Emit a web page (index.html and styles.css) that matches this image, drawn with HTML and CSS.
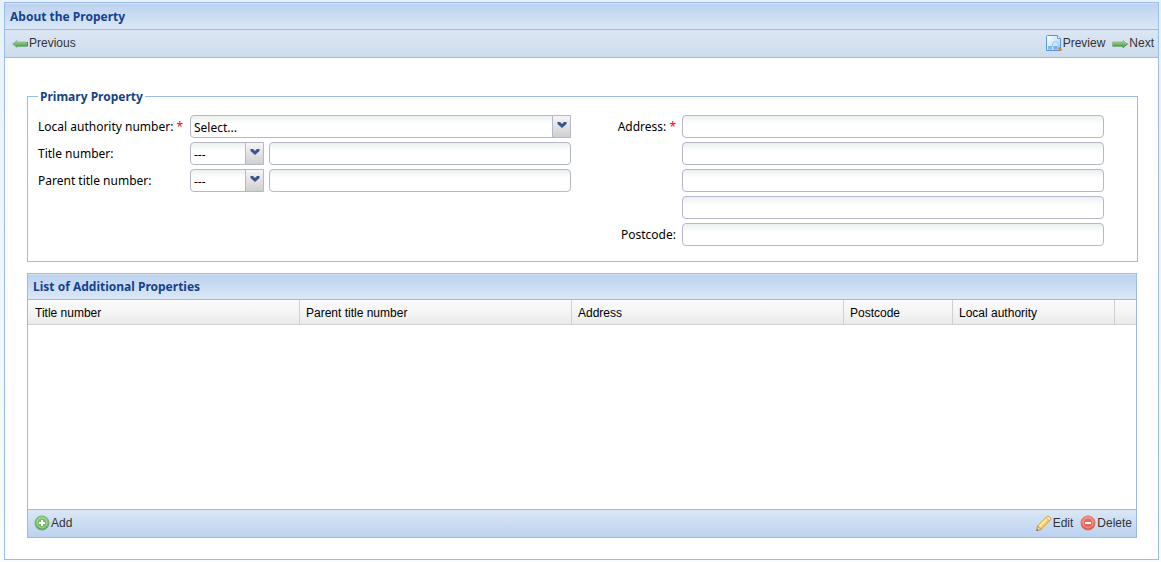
FILE: index.html
```
<!DOCTYPE html>
<html lang="en">
<head>
    <meta charset="UTF-8">
    <meta name="viewport" content="width=device-width, initial-scale=1.0">
    <title>About the Property</title>
    <link rel="stylesheet" href="styles.css">
</head>
<body>
    <!-- Shared gradients for the icons -->
    <svg class="defs" aria-hidden="true">
        <defs>
            <linearGradient id="green" x1="0" y1="0" x2="0" y2="1">
                <stop offset="0" stop-color="#a2d792"/>
                <stop offset="1" stop-color="#4f9b4d"/>
            </linearGradient>
            <linearGradient id="red" x1="0" y1="0" x2="0" y2="1">
                <stop offset="0" stop-color="#f79a8c"/>
                <stop offset="1" stop-color="#dc4b40"/>
            </linearGradient>
            <linearGradient id="page" x1="0" y1="0" x2="1" y2="1">
                <stop offset="0" stop-color="#ffffff"/>
                <stop offset="1" stop-color="#a9d2f4"/>
            </linearGradient>
        </defs>
    </svg>

    <main class="panel">
        <h1 class="panel-header">About the Property</h1>

        <div class="toolbar toolbar-top">
            <button type="button" class="btn">
                <svg class="icon" viewBox="0 0 16 16"><path d="M.5 9L5 5.500v1.500h10.500v4H5v1.500z" fill="url(#green)" stroke="#86bd7e" stroke-width=".8"/><path d="M15.500 7v4H5" fill="none" stroke="#4c8f4c"/></svg>
                Previous
            </button>
            <span class="fill"></span>
            <button type="button" class="btn">
                <svg class="icon" viewBox="0 0 16 16"><path d="M.5 1.500q0-1 1-1h10l3 3v12H.5z" fill="url(#page)" stroke="#5b94d2"/><path d="M11.500.5v3h3" fill="#e4f1fc" stroke="#6ea3da"/><path d="M2 11h4v3.500H2z" fill="#76bdf3"/><path d="M6.500 12V9.500a3 3 0 0 1 6 0V12" fill="#c8e4fb" stroke="#9ccaf4"/><path d="M7.500 11h4v3.500h-4z" fill="#68b3ef"/><path d="M12.500 12.500l3 3" stroke="#c58d45" stroke-width="2.400"/></svg>
                Preview
            </button>
            <button type="button" class="btn">
                <svg class="icon" viewBox="0 0 16 16"><path d="M15.500 9L11 5.500v1.500H.5v4H11v1.500z" fill="url(#green)" stroke="#86bd7e" stroke-width=".8"/><path d="M.5 11H11v1.500L15.500 9" fill="none" stroke="#4c8f4c"/></svg>
                Next
            </button>
        </div>

        <div class="panel-body">
            <fieldset class="fieldset">
                <legend>Primary Property</legend>
                <div class="form">
                    <div class="form-left">
                        <label for="authority">Local authority number: <span class="required">*</span></label>
                        <div class="combo">
                            <select id="authority"><option>Select...</option></select>
                            <svg class="arrow" viewBox="0 0 10 6"><path d="M.5 0h2.500l2 2 2-2h2.500v2L5 6 .5 2z"/></svg>
                        </div>

                        <label for="title-number">Title number:</label>
                        <div class="field-pair">
                            <div class="combo combo-small">
                                <select aria-label="Title number prefix"><option>---</option></select>
                                <svg class="arrow" viewBox="0 0 10 6"><path d="M.5 0h2.500l2 2 2-2h2.500v2L5 6 .5 2z"/></svg>
                            </div>
                            <input type="text" id="title-number">
                        </div>

                        <label for="parent-number">Parent title number:</label>
                        <div class="field-pair">
                            <div class="combo combo-small">
                                <select aria-label="Parent title number prefix"><option>---</option></select>
                                <svg class="arrow" viewBox="0 0 10 6"><path d="M.5 0h2.500l2 2 2-2h2.500v2L5 6 .5 2z"/></svg>
                            </div>
                            <input type="text" id="parent-number">
                        </div>
                    </div>

                    <div class="form-right">
                        <label for="address1">Address: <span class="required">*</span></label>
                        <div class="address-lines">
                            <input type="text" id="address1">
                            <input type="text" aria-label="Address line 2">
                            <input type="text" aria-label="Address line 3">
                            <input type="text" aria-label="Address line 4">
                        </div>
                        <label for="postcode">Postcode:</label>
                        <input type="text" id="postcode">
                    </div>
                </div>
            </fieldset>

            <section class="grid">
                <h2 class="panel-header">List of Additional Properties</h2>
                <div class="grid-body">
                    <table>
                        <colgroup>
                            <col><col><col>
                            <col class="col-postcode">
                            <col class="col-authority">
                            <col class="col-scroll">
                        </colgroup>
                        <thead>
                            <tr>
                                <th>Title number</th>
                                <th>Parent title number</th>
                                <th>Address</th>
                                <th>Postcode</th>
                                <th>Local authority</th>
                                <td></td>
                            </tr>
                        </thead>
                    </table>
                </div>
                <div class="toolbar toolbar-bottom">
                    <button type="button" class="btn">
                        <svg class="icon" viewBox="0 0 16 16"><circle cx="8" cy="8" r="7" fill="url(#green)" stroke="#6fae68"/><circle cx="8" cy="8" r="5" fill="#79bd68" stroke="#a9d99c"/><path d="M8 5v6M5 8h6" stroke="#fff" stroke-width="2"/></svg>
                        Add
                    </button>
                    <span class="fill"></span>
                    <button type="button" class="btn">
                        <svg class="icon" viewBox="0 0 16 16"><path d="M1.500 11L11 1.500q1-1 2 0l1.500 1.500q1 1 0 2L5 14.500l-4 1z" fill="#f9c752" stroke="#d39a3e" stroke-width=".8"/><path d="M3.500 11.500l8-8" stroke="#fff0a0" stroke-width="2"/><path d="M1.500 11L5 14.500l-4 1z" fill="#f4dfba" stroke="#b88746" stroke-width=".8"/><path d="M.8 14l1.600 1.300-1.900.5z" fill="#555"/><path d="M11 1.500q1-1 2 0l1.500 1.500q1 1 0 2l-1 1-3.500-3.500z" fill="#fbe7b8" stroke="#c9994b" stroke-width=".8"/></svg>
                        Edit
                    </button>
                    <button type="button" class="btn">
                        <svg class="icon" viewBox="0 0 16 16"><circle cx="8" cy="8" r="7" fill="url(#red)" stroke="#dc6c62"/><circle cx="8" cy="8" r="5" fill="#e9685b" stroke="#f5a298"/><path d="M5 8h6" stroke="#fff" stroke-width="2"/></svg>
                        Delete
                    </button>
                </div>
            </section>
        </div>
    </main>
</body>
</html>
```
FILE: styles.css
```
:root {
    --border: #99bce8;
    --field-border: #b5b8c8;
    --title: #15428b;
}

* {
    box-sizing: border-box;
}

body {
    display: flex;
    min-height: 100vh;
    margin: 0;
    padding: 2px 2px 2px 4px;
    background: linear-gradient(#e8f1fa, #f8fcff);
    color: #000;
    font-family: "Noto Sans", Tahoma, sans-serif;
    font-size: 12px;
}

.defs {
    position: absolute;
    width: 0;
    height: 0;
}

.panel {
    display: flex;
    flex: 1;
    flex-direction: column;
    border: 1px solid var(--border);
    background: #fff;
}

.panel-header {
    height: 26px;
    margin: 0;
    padding: 0 5px;
    background: linear-gradient(#bcd2ef, #dae7f6);
    box-shadow: inset 0 1px #d3e1f5;
    color: var(--title);
    font-size: 12px;
    font-weight: bold;
    line-height: 27px;
}

.toolbar {
    display: flex;
    align-items: center;
    gap: 7px;
    height: 29px;
    padding: 0 4px 2px 7px;
    border-top: 1px solid var(--border);
}

.toolbar-top {
    border-bottom: 1px solid var(--border);
    background: linear-gradient(#dce6f4, #cddced);
}

.toolbar-bottom {
    height: 28px;
    padding: 0 4px 2px 6px;
    background: linear-gradient(#dae7f6, #bcd2ef);
}

.fill {
    flex: 1;
}

.btn {
    display: flex;
    align-items: center;
    gap: 1px;
    padding: 0;
    border: 0;
    background: none;
    color: #333;
    font-family: "Liberation Sans", Arial, sans-serif;
    font-size: 12px;
    line-height: 16px;
    cursor: pointer;
}

.icon {
    width: 16px;
    height: 16px;
}

.panel-body {
    display: flex;
    flex: 1;
    flex-direction: column;
    gap: 11px;
    padding: 31px 20px 21px 22px;
}

/* Primary property form */
.fieldset {
    min-width: 0;
    margin: 0;
    padding: 11px 33px 15px 10px;
    border: 1px solid var(--border);
}

.fieldset legend {
    padding: 0 2px;
    color: var(--title);
    font-weight: bold;
    line-height: 15px;
}

.form {
    display: grid;
    grid-template-columns: 533fr 533fr;
    align-items: start;
}

.form-left {
    display: grid;
    grid-template-columns: 152px 1fr;
    row-gap: 4px;
}

.form-right {
    display: grid;
    grid-template-columns: 105px 1fr;
    gap: 4px 6px;
}

.form-right label {
    text-align: right;
}

label {
    height: 23px;
    line-height: 24px;
}

.required {
    color: #f00;
}

.field-pair {
    display: flex;
    gap: 5px;
}

.address-lines {
    display: grid;
    gap: 4px;
}

input,
select {
    width: 100%;
    min-width: 0;
    height: 23px;
    margin: 0;
    padding: 0 4px;
    border: 1px solid var(--field-border);
    border-radius: 4px;
    background: linear-gradient(#eceff0, #fff 8px);
    color: #000;
    font-family: inherit;
    font-size: 12px;
}

select {
    padding: 2px 20px 0 3px;
    border-top-right-radius: 0;
    border-bottom-right-radius: 0;
    appearance: none;
}

.combo {
    position: relative;
    display: flex;
}

.combo-small {
    flex: 0 0 74px;
}

.combo::after {
    content: "";
    position: absolute;
    top: 1px;
    right: 1px;
    bottom: 1px;
    width: 17px;
    border-left: 1px solid var(--field-border);
    background: linear-gradient(#f6f6f6, #cfcfcf);
    pointer-events: none;
}

.arrow {
    position: absolute;
    z-index: 1;
    top: 7px;
    right: 4px;
    width: 10px;
    height: 6px;
    fill: #39558f;
    pointer-events: none;
}

/* Additional properties grid */
.grid {
    display: flex;
    flex: 1;
    flex-direction: column;
    margin-right: 1px;
    border: 1px solid var(--border);
}

.grid .panel-header {
    height: 25px;
    line-height: 26px;
}

.grid-body {
    flex: 1;
    border-top: 1px solid var(--border);
}

table {
    width: 100%;
    border-collapse: separate;
    border-spacing: 0;
    table-layout: fixed;
}

.col-postcode {
    width: 109px;
}

.col-authority {
    width: 162px;
}

.col-scroll {
    width: 21px;
}

th,
thead td {
    height: 25px;
    padding: 2px 6px 0;
    border-right: 1px solid #d0d0d0;
    border-bottom: 1px solid #d0d0d0;
    background: linear-gradient(#fafafa, #f5f5f5 50%, #e9eaec);
    font-family: "Liberation Sans", Arial, sans-serif;
    font-weight: normal;
    text-align: left;
}

th:first-child {
    padding-left: 7px;
}

thead td {
    border-right: 0;
}
```
